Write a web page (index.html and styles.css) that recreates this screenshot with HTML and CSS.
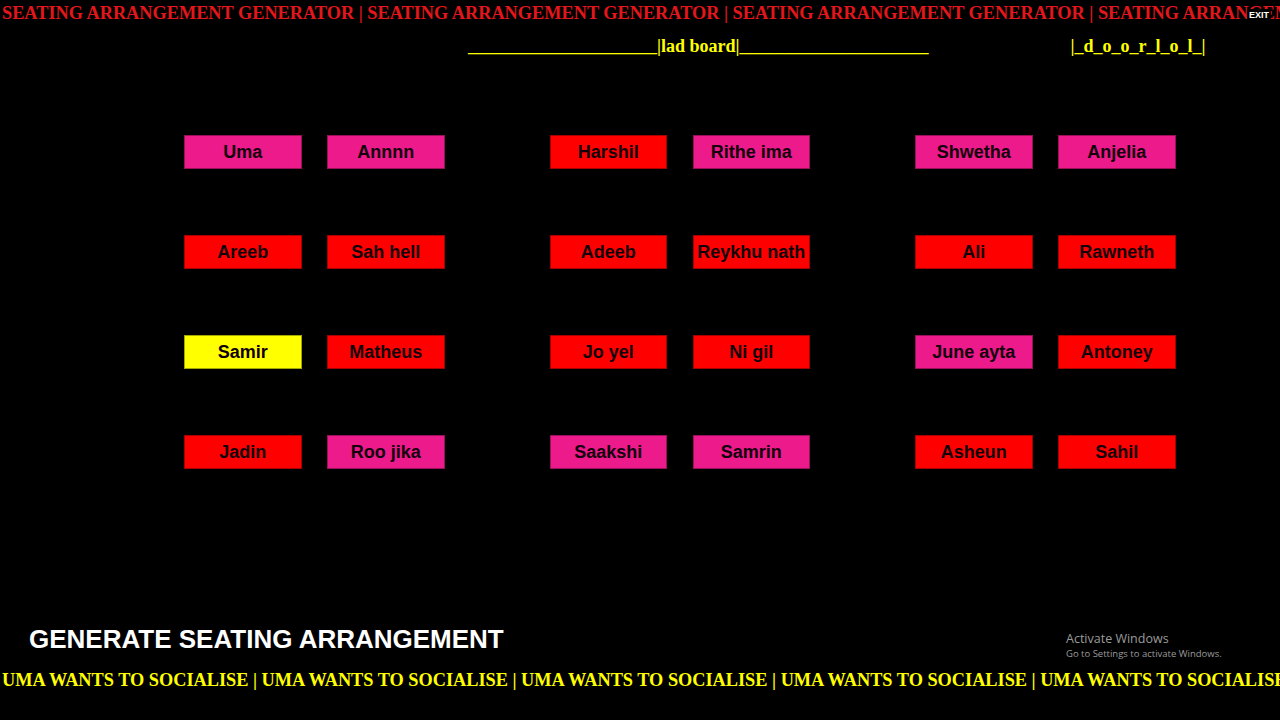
FILE: index.html
```html
<!DOCTYPE html>
<html>
<head>
<meta charset="utf-8">
<title>Seating Arrangement Generator</title>
<link rel="stylesheet" href="styles.css">
</head>
<body>
<div class="page">
  <div class="marquee-top">SEATING ARRANGEMENT GENERATOR | SEATING ARRANGEMENT GENERATOR | SEATING ARRANGEMENT GENERATOR | SEATING ARRANGEMENT GENERATOR | SEATING ARRANGEMENT GENERATOR |</div>
  <button class="exit">EXIT</button>

  <div class="header">
    <span class="board">_____________________|lad board|_____________________</span>
    <span class="door">|_d_o_o_r_l_o_l_|</span>
  </div>

  <div class="room">
    <div class="group">
      <div class="seat pink">Uma</div>
      <div class="seat pink">Annnn</div>
      <div class="seat red">Areeb</div>
      <div class="seat red">Sah hell</div>
      <div class="seat yellow">Samir</div>
      <div class="seat red">Matheus</div>
      <div class="seat red">Jadin</div>
      <div class="seat pink">Roo jika</div>
    </div>
    <div class="group">
      <div class="seat red">Harshil</div>
      <div class="seat pink">Rithe ima</div>
      <div class="seat red">Adeeb</div>
      <div class="seat red">Reykhu nath</div>
      <div class="seat red">Jo yel</div>
      <div class="seat red">Ni gil</div>
      <div class="seat pink">Saakshi</div>
      <div class="seat pink">Samrin</div>
    </div>
    <div class="group">
      <div class="seat pink">Shwetha</div>
      <div class="seat pink">Anjelia</div>
      <div class="seat red">Ali</div>
      <div class="seat red">Rawneth</div>
      <div class="seat pink">June ayta</div>
      <div class="seat red">Antoney</div>
      <div class="seat red">Asheun</div>
      <div class="seat red">Sahil</div>
    </div>
  </div>

  <div class="footer">
    <div class="generate">GENERATE SEATING ARRANGEMENT</div>
    <div class="marquee-bottom">UMA WANTS TO SOCIALISE | UMA WANTS TO SOCIALISE | UMA WANTS TO SOCIALISE | UMA WANTS TO SOCIALISE | UMA WANTS TO SOCIALISE | UMA WANTS TO SOCIALISE |</div>
  </div>

  <div class="watermark">
    <div class="wm-title">Activate Windows</div>
    <div class="wm-sub">Go to Settings to activate Windows.</div>
  </div>
</div>
</body>
</html>
```

FILE: styles.css
```css
html, body {
  margin: 0;
  padding: 0;
  background: #000;
}

.page {
  position: relative;
  width: 1280px;
  height: 720px;
  overflow: hidden;
  background: #000;
  display: flex;
  flex-direction: column;
}

.marquee-top,
.marquee-bottom {
  font-family: "Liberation Serif", "Times New Roman", serif;
  font-weight: bold;
  font-size: 18.3px;
  line-height: 24px;
  height: 24px;
  white-space: nowrap;
  overflow: hidden;
  padding-left: 2px;
}

.marquee-top {
  color: #e3161b;
  padding-top: 1px;
}

.marquee-bottom {
  color: #ffff00;
  margin-top: 14px;
}

.exit {
  position: absolute;
  top: 9px;
  right: 9px;
  margin: 0;
  padding: 1px 2px;
  border: none;
  background: #000;
  color: #fff;
  font-family: "Liberation Sans", Arial, sans-serif;
  font-weight: bold;
  font-size: 9px;
  line-height: 10px;
}

.header {
  display: flex;
  gap: 142px;
  padding-left: 468px;
  margin-top: 9px;
  height: 24px;
  font-family: "Liberation Serif", "Times New Roman", serif;
  font-weight: bold;
  font-size: 18px;
  line-height: 24px;
  color: #ffff00;
  white-space: nowrap;
}

.room {
  display: flex;
  gap: 105px;
  padding-left: 184px;
  margin-top: 77px;
}

.group {
  display: grid;
  grid-template-columns: 117.5px 117.5px;
  grid-auto-rows: 34px;
  gap: 66px 25.5px;
}

.seat {
  box-sizing: border-box;
  display: flex;
  align-items: center;
  justify-content: center;
  font-family: "Liberation Sans", Arial, sans-serif;
  font-weight: bold;
  font-size: 18px;
  color: #12000a;
  border: 1px solid rgba(0, 0, 0, 0.35);
  white-space: nowrap;
}

.pink { background: #ec1a8a; }
.red { background: #ff0000; }
.yellow { background: #ffff00; }

.footer {
  margin-top: auto;
  padding-bottom: 28px;
}

.generate {
  padding-left: 29px;
  font-family: "Liberation Sans", Arial, sans-serif;
  font-weight: bold;
  font-size: 26px;
  line-height: 30px;
  color: #fff;
  white-space: nowrap;
}

.watermark {
  position: absolute;
  left: 1066px;
  top: 630px;
  color: #9b9b9b;
  font-family: "Open Sans", "Noto Sans", sans-serif;
}

.wm-title {
  font-size: 12.5px;
  line-height: 17px;
}

.wm-sub {
  font-size: 9.5px;
  line-height: 13px;
}
```
